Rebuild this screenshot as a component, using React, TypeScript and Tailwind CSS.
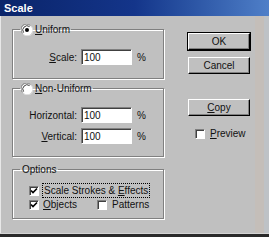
import type { ReactNode } from "react";

function Radio({ checked }: { checked?: boolean }) {
  return (
    <svg width="12" height="12" viewBox="0 0 12 12" className="shrink-0">
      <circle cx="6" cy="6" r="5.5" fill="#fff" />
      <path d="M1.6 9.4A5.5 5.5 0 0 1 9.4 1.6" stroke="#808080" strokeWidth="1" fill="none" />
      <path d="M2.6 8.6A4.3 4.3 0 0 1 8.6 2.6" stroke="#404040" strokeWidth="1" fill="none" />
      <path d="M10.4 2.6A5.5 5.5 0 0 1 2.6 10.4" stroke="#e0e0e0" strokeWidth="1" fill="none" />
      {checked && <circle cx="6" cy="6" r="2" fill="#000" />}
    </svg>
  );
}

function Check({ checked }: { checked?: boolean }) {
  return (
    <span className="flex h-[10px] w-[10px] shrink-0 items-center justify-center border border-t-[#808080] border-l-[#808080] border-b-white border-r-white bg-white shadow-[inset_1px_1px_0_#404040]">
      {checked && (
        <svg width="8" height="8" viewBox="0 0 8 8">
          <path d="M1 3.5 L3 5.5 L7 1.5" stroke="#000" strokeWidth="1.6" fill="none" />
        </svg>
      )}
    </span>
  );
}

function Button({ children, primary }: { children: ReactNode; primary?: boolean }) {
  return (
    <div className={primary ? "border border-black" : "border border-transparent"}>
      <div className="flex h-[17px] w-[62px] items-center justify-center border border-t-white border-l-white border-b-black border-r-black bg-[#c0c0c0] shadow-[inset_-1px_-1px_0_#808080]">
        {children}
      </div>
    </div>
  );
}

function Field({ label, value }: { label: ReactNode; value: string }) {
  return (
    <div className="flex items-center">
      <span className="w-[68px] pr-[4px] text-right">{label}</span>
      <span className="flex h-[16px] w-[51px] items-center border border-t-[#808080] border-l-[#808080] border-b-white border-r-white bg-white pl-[2px] shadow-[inset_1px_1px_0_#404040]">
        {value}
      </span>
      <span className="ml-[5px]">%</span>
    </div>
  );
}

const groupBox =
  "w-[152px] border border-[#808080] shadow-[inset_1px_1px_0_#fff,1px_1px_0_#fff]";

export default function App() {
  return (
    <div className="flex h-[237px] w-[269px] flex-col overflow-hidden bg-[#c0c0c0] font-['Liberation_Sans',Arial,sans-serif] text-[10px] leading-[13px] text-[#111]">
      <div className="flex h-[16px] shrink-0 items-center bg-gradient-to-r from-[#0a246a] via-[#14358a] to-[#4f7fc8] pl-[4px] text-[11px] font-bold text-white">
        Scale
      </div>
      <div className="flex flex-1 border-l border-l-[#e8e8e8]">
        <div className="flex flex-col pl-[11px] pt-[7px]">
          <fieldset className={`${groupBox} h-[56px]`}>
            <legend className="ml-[7px] flex items-center gap-[2px] px-[1px]">
              <Radio checked />
              <span>
                <u>U</u>niform
              </span>
            </legend>
            <div className="pt-[13px]">
              <Field
                label={
                  <>
                    <u>S</u>cale:
                  </>
                }
                value="100"
              />
            </div>
          </fieldset>

          <fieldset className={`${groupBox} mt-[3px] h-[75px]`}>
            <legend className="ml-[7px] flex items-center gap-[2px] px-[1px]">
              <Radio />
              <span>
                <u>N</u>on-Uniform
              </span>
            </legend>
            <div className="flex flex-col gap-[5px] pt-[12px]">
              <Field label="Horizontal:" value="100" />
              <Field
                label={
                  <>
                    <u>V</u>ertical:
                  </>
                }
                value="100"
              />
            </div>
          </fieldset>

          <fieldset className={`${groupBox} mt-[6px] h-[56px]`}>
            <legend className="ml-[7px] px-[2px]">Options</legend>
            <div className="flex flex-col pl-[16px] pt-[7px]">
              <div className="flex items-center gap-[3px]">
                <Check checked />
                <span className="border border-dotted border-black px-[1px]">
                  Scale Strokes &amp; <u>E</u>ffects
                </span>
              </div>
              <div className="flex items-center">
                <Check checked />
                <span className="ml-[4px] w-[54px]">
                  <u>O</u>bjects
                </span>
                <Check />
                <span className="ml-[5px]">Patterns</span>
              </div>
            </div>
          </fieldset>
        </div>

        <div className="flex flex-col pl-[23px] pt-[16px]">
          <Button primary>OK</Button>
          <div className="mt-[5px]">
            <Button>Cancel</Button>
          </div>
          <div className="mt-[23px]">
            <Button>
              <span>
                <u>C</u>opy
              </span>
            </Button>
          </div>
          <div className="mt-[10px] flex items-center gap-[5px] pl-[8px]">
            <Check />
            <span>
              <u>P</u>review
            </span>
          </div>
        </div>

        <div className="ml-auto flex">
          <div className="w-[9px] bg-[#c4beb9]" />
          <div className="w-[5px] bg-[#bec2c6]" />
        </div>
      </div>
      <div className="h-[1px] shrink-0 bg-[#d4d4d4]" />
      <div className="h-[3px] shrink-0 bg-[#2a2a2a]" />
    </div>
  );
}
